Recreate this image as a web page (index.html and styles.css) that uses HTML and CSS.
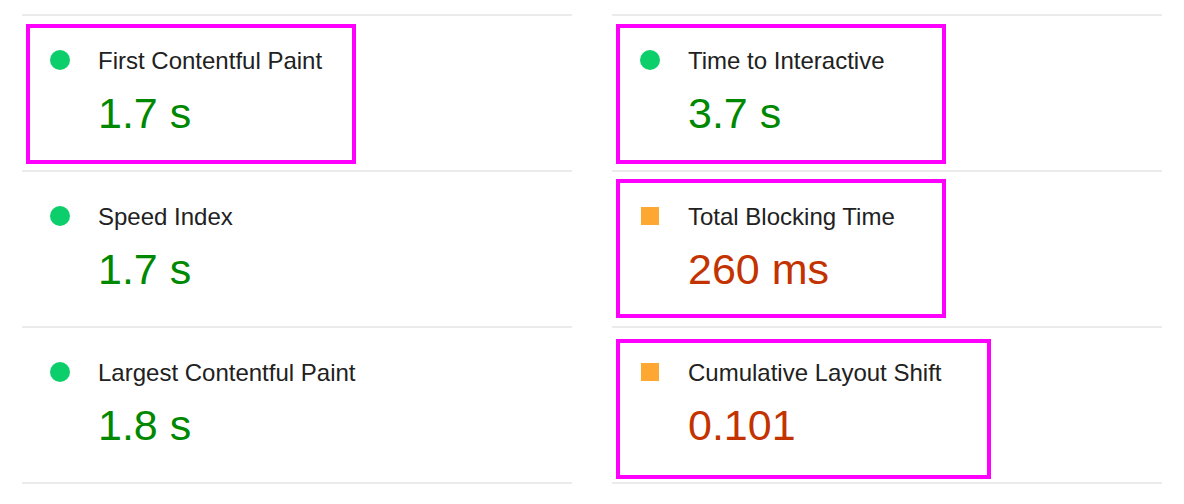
FILE: index.html
```html
<!DOCTYPE html>
<html lang="en">
<head>
  <meta charset="UTF-8" />
  <meta name="viewport" content="width=device-width, initial-scale=1.0"/>
  <title>Lab Data | Metrics</title>
  <link rel="stylesheet" href="styles.css">
</head>
<body>
  <div class="metrics">
    <!-- Left column: FCP, SI, LCP / right column: TTI, TBT, CLS -->
    <div class="metric">
      <span class="highlight"></span>
      <span class="score-icon pass"></span>
      <div class="metric-text">
        <div class="metric-title">First Contentful Paint</div>
        <div class="metric-value pass">1.7 s</div>
      </div>
    </div>

    <div class="metric">
      <span class="highlight"></span>
      <span class="score-icon pass"></span>
      <div class="metric-text">
        <div class="metric-title">Time to Interactive</div>
        <div class="metric-value pass">3.7 s</div>
      </div>
    </div>

    <div class="metric">
      <span class="score-icon pass"></span>
      <div class="metric-text">
        <div class="metric-title">Speed Index</div>
        <div class="metric-value pass">1.7 s</div>
      </div>
    </div>

    <div class="metric">
      <span class="highlight highlight-tight"></span>
      <span class="score-icon average"></span>
      <div class="metric-text">
        <div class="metric-title">Total Blocking Time</div>
        <div class="metric-value average">260 ms</div>
      </div>
    </div>

    <div class="metric last">
      <span class="score-icon pass"></span>
      <div class="metric-text">
        <div class="metric-title">Largest Contentful Paint</div>
        <div class="metric-value pass">1.8 s</div>
      </div>
    </div>

    <div class="metric last">
      <span class="highlight highlight-wide"></span>
      <span class="score-icon average"></span>
      <div class="metric-text">
        <div class="metric-title">Cumulative Layout Shift</div>
        <div class="metric-value average">0.101</div>
      </div>
    </div>
  </div>
</body>
</html>
```

FILE: styles.css
```css
* {
  box-sizing: border-box;
}

body {
  margin: 0;
  padding: 0;
  font-family: "Liberation Sans", Helvetica, Arial, sans-serif;
  background: #fff;
  color: #212121;
}

.metrics {
  display: grid;
  grid-template-columns: 550px 550px;
  column-gap: 40px;
  padding: 14px 22px 0;
}

.metric {
  position: relative;
  display: flex;
  align-items: flex-start;
  gap: 28px;
  height: 156px;
  padding: 31px 0 0 28px;
  border-top: 2px solid #ebebeb;
}

.metric.last {
  height: 158px;
  border-bottom: 2px solid #ebebeb;
}

/* score markers: green dot for pass, orange square for average */
.score-icon {
  flex: none;
}

.score-icon.pass {
  width: 20px;
  height: 20px;
  margin-top: 3px;
  background-color: #0cce6b;
  border-radius: 50%;
}

.score-icon.average {
  width: 18px;
  height: 18px;
  margin: 4px 1px 0;
  background-color: #ffa733;
}

.metric-title {
  font-size: 24px;
  line-height: 28px;
}

.metric-value {
  margin-top: 12px;
  font-size: 43px;
  line-height: 52px;
}

.metric-value.pass {
  color: #008800;
}

.metric-value.average {
  color: #c33300;
}

/* magenta call-out frames drawn over a metric */
.highlight {
  position: absolute;
  top: 8px;
  left: 4px;
  width: 330px;
  height: 140px;
  border: 4px solid #f0f;
  pointer-events: none;
}

.highlight-tight {
  top: 7px;
  height: 139px;
}

.highlight-wide {
  top: 11px;
  width: 375px;
}
```
